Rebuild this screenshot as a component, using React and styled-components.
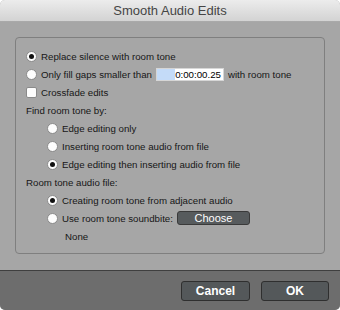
import styled, { createGlobalStyle } from "styled-components"

const Global = createGlobalStyle`
  html, body {
    margin: 0;
    padding: 0;
    background: #ffffff;
  }
  * {
    box-sizing: border-box;
  }
`

const Window = styled.div`
  width: 340px;
  height: 310px;
  display: flex;
  flex-direction: column;
  border-radius: 5px;
  overflow: hidden;
  background: #a6a6a6;
  font-family: "Liberation Sans", Arial, sans-serif;
  color: #161616;
`

const TitleBar = styled.div`
  height: 22px;
  flex: none;
  display: flex;
  align-items: center;
  justify-content: center;
  background: linear-gradient(#ececec, #d3d3d3);
  border-bottom: 1px solid #a9a9a9;
  font-size: 13px;
  color: #454545;
`

const Body = styled.div`
  flex: 1;
  padding: 15px 15px 16px 15px;
  display: flex;
`

const Group = styled.div`
  flex: 1;
  border: 1px solid #7f7f7f;
  border-radius: 4px;
  padding: 9px 10px 8px 10px;
  display: flex;
  flex-direction: column;
`

const Row = styled.div`
  height: 18px;
  display: flex;
  align-items: center;
  gap: 4px;
  padding-left: ${(p) => p.$indent || 0}px;
  font-size: 9.7px;
  white-space: nowrap;
`

const Radio = styled.span`
  width: 11px;
  height: 11px;
  flex: none;
  border-radius: 50%;
  background: #fdfdfd;
  border: 1px solid #8a8a8a;
  display: flex;
  align-items: center;
  justify-content: center;

  &::after {
    content: "";
    width: 5px;
    height: 5px;
    border-radius: 50%;
    background: ${(p) => (p.$on ? "#111" : "transparent")};
  }
`

const Check = styled.span`
  width: 11px;
  height: 11px;
  flex: none;
  border-radius: 2px;
  background: #fdfdfd;
  border: 1px solid #8a8a8a;
`

const Field = styled.span`
  width: 68px;
  height: 13px;
  border: 1px solid #d6d6d6;
  background: linear-gradient(to right, #c4dbf8 0 18px, #ffffff 18px);
  display: flex;
  align-items: center;
  justify-content: flex-end;
  padding-right: 2px;
  font-size: 9.7px;
  color: #000;
`

const Note = styled.div`
  height: 18px;
  display: flex;
  align-items: center;
  padding-left: 39px;
  font-size: 9.7px;
`

const SmallButton = styled.button`
  width: 73px;
  height: 14px;
  padding: 0;
  border: 1px solid #3a3a3a;
  border-radius: 3px;
  background: #575b5d;
  color: #ffffff;
  font-family: "Liberation Sans", Arial, sans-serif;
  font-size: 11px;
  line-height: 12px;
`

const Footer = styled.div`
  height: 40px;
  flex: none;
  border-top: 1px solid #3f3f3f;
  background: #6d6d6d;
  display: flex;
  align-items: center;
  justify-content: flex-end;
  gap: 11px;
  padding-right: 11px;
`

const Button = styled.button`
  width: ${(p) => p.$w}px;
  height: 20px;
  padding: 0;
  border: 1px solid #2f2f2f;
  border-radius: 3px;
  background: #54585a;
  color: #ffffff;
  font-family: "Liberation Sans", Arial, sans-serif;
  font-weight: bold;
  font-size: 12px;
`

export default function App() {
  return (
    <>
      <Global />
      <Window>
        <TitleBar>Smooth Audio Edits</TitleBar>
        <Body>
          <Group>
            <Row>
              <Radio $on />
              Replace silence with room tone
            </Row>
            <Row>
              <Radio />
              Only fill gaps smaller than
              <Field>0:00:00.25</Field>
              with room tone
            </Row>
            <Row>
              <Check />
              Crossfade edits
            </Row>
            <Row>Find room tone by:</Row>
            <Row $indent={21}>
              <Radio />
              Edge editing only
            </Row>
            <Row $indent={21}>
              <Radio />
              Inserting room tone audio from file
            </Row>
            <Row $indent={21}>
              <Radio $on />
              Edge editing then inserting audio from file
            </Row>
            <Row>Room tone audio file:</Row>
            <Row $indent={21}>
              <Radio $on />
              Creating room tone from adjacent audio
            </Row>
            <Row $indent={21}>
              <Radio />
              Use room tone soundbite:
              <SmallButton>Choose</SmallButton>
            </Row>
            <Note>None</Note>
          </Group>
        </Body>
        <Footer>
          <Button $w={69}>Cancel</Button>
          <Button $w={68}>OK</Button>
        </Footer>
      </Window>
    </>
  )
}
